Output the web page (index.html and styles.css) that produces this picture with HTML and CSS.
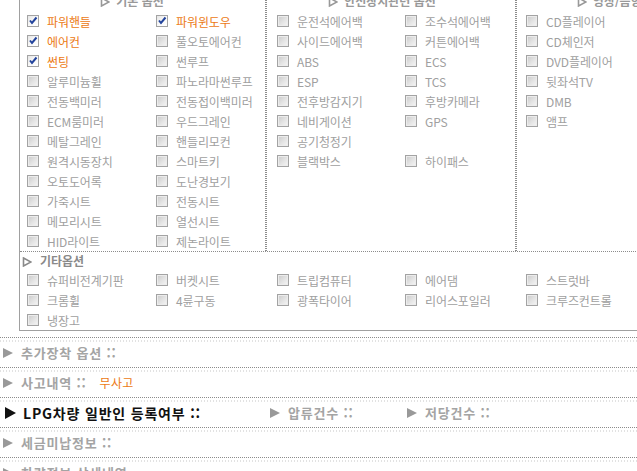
FILE: index.html
```html
<!DOCTYPE html>
<html lang="ko">
<head>
  <meta charset="UTF-8" />
  <meta name="viewport" content="width=device-width, initial-scale=1.0"/>
  <title>차량 옵션 정보</title>
  <link rel="stylesheet" href="styles.css">
</head>
<body>

  <!-- 옵션 박스 -->
  <div class="options">
    <div class="opt-main">

      <div class="group g-basic">
        <div class="group-title"><svg class="hollow" viewBox="0 0 10 10"><polygon points="1.5,1 9,5 1.5,9"/></svg>기본 옵션</div>
        <ul class="chk-list">
          <li class="on"><span class="chk"><svg viewBox="0 0 10 10"><polyline points="2,4.5 4,7 8.5,1.5"/></svg></span>파워핸들</li>
          <li class="on"><span class="chk"><svg viewBox="0 0 10 10"><polyline points="2,4.5 4,7 8.5,1.5"/></svg></span>파워윈도우</li>
          <li class="on"><span class="chk"><svg viewBox="0 0 10 10"><polyline points="2,4.5 4,7 8.5,1.5"/></svg></span>에어컨</li>
          <li><span class="chk"></span>풀오토에어컨</li>
          <li class="on"><span class="chk"><svg viewBox="0 0 10 10"><polyline points="2,4.5 4,7 8.5,1.5"/></svg></span>썬팅</li>
          <li><span class="chk"></span>썬루프</li>
          <li><span class="chk"></span>알루미늄휠</li>
          <li><span class="chk"></span>파노라마썬루프</li>
          <li><span class="chk"></span>전동백미러</li>
          <li><span class="chk"></span>전동접이백미러</li>
          <li><span class="chk"></span>ECM룸미러</li>
          <li><span class="chk"></span>우드그레인</li>
          <li><span class="chk"></span>메탈그레인</li>
          <li><span class="chk"></span>핸들리모컨</li>
          <li><span class="chk"></span>원격시동장치</li>
          <li><span class="chk"></span>스마트키</li>
          <li><span class="chk"></span>오토도어록</li>
          <li><span class="chk"></span>도난경보기</li>
          <li><span class="chk"></span>가죽시트</li>
          <li><span class="chk"></span>전동시트</li>
          <li><span class="chk"></span>메모리시트</li>
          <li><span class="chk"></span>열선시트</li>
          <li><span class="chk"></span>HID라이트</li>
          <li><span class="chk"></span>제논라이트</li>
        </ul>
      </div>

      <div class="group g-safety">
        <div class="group-title"><svg class="hollow" viewBox="0 0 10 10"><polygon points="1.5,1 9,5 1.5,9"/></svg>안전장치관련 옵션</div>
        <ul class="chk-list">
          <li><span class="chk"></span>운전석에어백</li>
          <li><span class="chk"></span>조수석에어백</li>
          <li><span class="chk"></span>사이드에어백</li>
          <li><span class="chk"></span>커튼에어백</li>
          <li><span class="chk"></span>ABS</li>
          <li><span class="chk"></span>ECS</li>
          <li><span class="chk"></span>ESP</li>
          <li><span class="chk"></span>TCS</li>
          <li><span class="chk"></span>전후방감지기</li>
          <li><span class="chk"></span>후방카메라</li>
          <li><span class="chk"></span>네비게이션</li>
          <li><span class="chk"></span>GPS</li>
          <li><span class="chk"></span>공기청정기</li>
          <li></li>
          <li><span class="chk"></span>블랙박스</li>
          <li><span class="chk"></span>하이패스</li>
        </ul>
      </div>

      <div class="group g-av">
        <div class="group-title"><svg class="hollow" viewBox="0 0 10 10"><polygon points="1.5,1 9,5 1.5,9"/></svg>영상/음향 옵션</div>
        <ul class="chk-list">
          <li><span class="chk"></span>CD플레이어</li>
          <li><span class="chk"></span>CD체인저</li>
          <li><span class="chk"></span>DVD플레이어</li>
          <li><span class="chk"></span>뒷좌석TV</li>
          <li><span class="chk"></span>DMB</li>
          <li><span class="chk"></span>앰프</li>
        </ul>
      </div>
    </div>

    <!-- 기타옵션 -->
    <div class="opt-etc">
      <div class="etc-title"><svg class="hollow" viewBox="0 0 10 10"><polygon points="1.5,1 9,5 1.5,9"/></svg>기타옵션</div>
      <ul class="chk-list">
        <li><span class="chk"></span>슈퍼비전계기판</li>
        <li><span class="chk"></span>버켓시트</li>
        <li><span class="chk"></span>트립컴퓨터</li>
        <li><span class="chk"></span>에어댐</li>
        <li><span class="chk"></span>스트럿바</li>
        <li><span class="chk"></span>크롬휠</li>
        <li><span class="chk"></span>4륜구동</li>
        <li><span class="chk"></span>광폭타이어</li>
        <li><span class="chk"></span>리어스포일러</li>
        <li><span class="chk"></span>크루즈컨트롤</li>
        <li><span class="chk"></span>냉장고</li>
      </ul>
    </div>
  </div>

  <!-- 상세 정보 -->
  <div class="info-list">
    <div class="info-row">
      <div class="info-item"><span class="tri"></span>추가장착 옵션 ::</div>
    </div>
    <div class="info-row">
      <div class="info-item"><span class="tri"></span>사고내역 ::<span class="value">무사고</span></div>
    </div>
    <div class="info-row lpg">
      <div class="info-item main"><span class="tri"></span>LPG차량 일반인 등록여부 ::</div>
      <div class="info-item sub"><span class="tri"></span>압류건수 ::</div>
      <div class="info-item"><span class="tri"></span>저당건수 ::</div>
    </div>
    <div class="info-row">
      <div class="info-item"><span class="tri"></span>세금미납정보 ::</div>
    </div>
    <div class="info-row">
      <div class="info-item"><span class="tri"></span>차량정보 상세내역</div>
    </div>
  </div>

</body>
</html>
```

FILE: styles.css
```css
* { box-sizing: border-box; }

html, body { overflow: hidden; }

body {
  margin: 0;
  font-family: "Noto Sans CJK KR", "Noto Sans", sans-serif;
  font-size: 12px;
  color: #a0a0a0;
  background: #fff;
}

/* 옵션 박스 (페이지가 조금 스크롤된 상태) */
.options {
  width: 728px;
  margin: -11px 0 0 19px;
  border: 1px solid #a0a0a0;
}

.opt-main {
  display: flex;
  border-bottom: 1px dotted #8c8c8c;
}

.g-basic {
  width: 246px;
  padding-left: 7px;
  border-right: 1px dotted #8c8c8c;
}

.g-safety {
  width: 250px;
  padding-left: 10px;
  border-left: 1px dotted #8c8c8c;
  border-right: 1px dotted #8c8c8c;
}

.g-av {
  width: 230px;
  padding-left: 9px;
  border-left: 1px dotted #8c8c8c;
}

.group-title {
  height: 21px;
  line-height: 21px;
  padding-right: 28px;
  text-align: center;
  font-weight: bold;
  color: #999;
}

.hollow {
  width: 10px;
  height: 10px;
  margin-right: 6px;
  vertical-align: -1px;
}

.hollow polygon {
  fill: none;
  stroke: #999;
  stroke-width: 1.6;
}

.chk-list {
  list-style: none;
  margin: 0;
  padding: 0;
  display: grid;
  grid-auto-rows: 20px;
}

.g-basic .chk-list { grid-template-columns: 129px 1fr; }
.g-safety .chk-list { grid-template-columns: 128px 1fr; }
.g-av .chk-list { grid-template-columns: 1fr; }

.chk-list li {
  display: flex;
  align-items: center;
  white-space: nowrap;
  letter-spacing: -0.1px;
}

.chk-list li.on { color: #ec7a14; }

.chk {
  width: 12px;
  height: 12px;
  margin-right: 8px;
  flex: none;
  border: 1px solid #a3a3a3;
  background: linear-gradient(135deg, #c9c9c9 0%, #e4e4e4 55%, #f6f6f6 100%);
  box-shadow: inset 0 0 0 1px #ececec;
}

.on .chk {
  background: linear-gradient(135deg, #e6e6e6 0%, #fbfbfb 60%, #fff 100%);
  box-shadow: none;
}

.chk svg {
  display: block;
  width: 10px;
  height: 10px;
}

.chk polyline {
  fill: none;
  stroke: #23449c;
  stroke-width: 2;
}

/* 기타옵션 */
.etc-title {
  height: 18px;
  line-height: 18px;
  padding-left: 2px;
  font-weight: bold;
  color: #8a8a8a;
}

.etc-title .hollow { margin-right: 8px; }
.etc-title .hollow polygon { stroke: #8a8a8a; }

.opt-etc .chk-list {
  padding-left: 7px;
  grid-template-columns: 129px 121px 128px 121px 1fr;
}

/* 상세 정보 줄 */
.info-list { margin-top: 6px; }

.info-row {
  display: flex;
  align-items: center;
  height: 30px;
  border-top: 1px dotted #8c8c8c;
  background-image: repeating-linear-gradient(90deg, #e2e2e2 0 1px, transparent 1px 3px);
  background-size: 100% 2px;
  background-position: 0 2px;
  background-repeat: no-repeat;
}

.info-item {
  display: flex;
  align-items: center;
  padding-left: 3px;
  font-size: 13px;
  font-weight: bold;
  letter-spacing: 0.8px;
  color: #a4a4a4;
  white-space: nowrap;
}

.tri {
  width: 0;
  height: 0;
  margin-right: 8px;
  border-left: 10px solid #999;
  border-top: 5px solid transparent;
  border-bottom: 5px solid transparent;
}

.value {
  margin-left: 13px;
  font-size: 12px;
  font-weight: normal;
  letter-spacing: 0.3px;
  color: #ec7a14;
}

.lpg .info-item { padding-left: 0; }

.lpg .main {
  width: 270px;
  padding-left: 5px;
  font-size: 14px;
  color: #111;
}

.lpg .main .tri {
  border-left: 11px solid #111;
  border-top-width: 6px;
  border-bottom-width: 6px;
  margin-right: 7px;
}

.lpg .sub { width: 137px; }
```
